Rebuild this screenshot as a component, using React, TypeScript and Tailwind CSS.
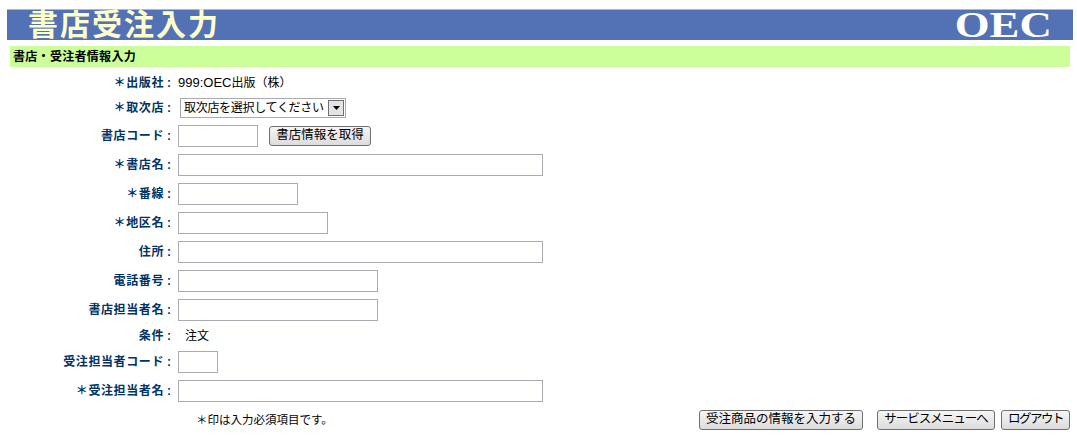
import React from 'react';

const font = { fontFamily: '"Liberation Sans", "Noto Sans CJK JP", sans-serif' };

const Label = ({ text }: { text: string }) => (
    <div className="flex w-[170px] shrink-0 justify-end text-[12px] font-bold tracking-[0.6px] text-[#003366]">
        <span>{text}</span>
        <span className="ml-[3px] w-[3px]">:</span>
    </div>
);

const Field = ({ label, width }: { label: string; width: string }) => (
    <div className="flex h-[29px] items-center">
        <Label text={label} />
        <input className={`ml-[8px] h-[22px] border border-[#aaaab2] bg-white ${width}`} />
    </div>
);

const Btn = ({ text, className = '' }: { text: string; className?: string }) => (
    <button className={`h-[20px] whitespace-nowrap rounded-[3px] border border-[#707070] bg-gradient-to-b from-[#f6f6f6] to-[#dcdcdc] text-center text-[12.5px] leading-none text-black ${className}`}>
        {text}
    </button>
);

export default function App() {
    return (
        <div className="h-[448px] w-[1077px] overflow-hidden bg-white pt-[9px]" style={font}>
            <div className="mx-[7px] flex h-[31px] w-[1066px] items-center justify-between border-t border-[#a9b8d8] bg-[#5372b6] pl-[21px] pr-[21px]">
                <span className="text-[30px] font-bold leading-none tracking-[2px] text-[#ffffcc]">書店受注入力</span>
                <span className="origin-right scale-x-[1.28] text-[35px] font-bold leading-none text-white" style={{ fontFamily: '"Liberation Serif", serif' }}>OEC</span>
            </div>
            <div className="mx-[10px] mt-[6px] flex h-[21px] w-[1060px] items-center bg-[#ccff99] pl-[3px] text-[12px] font-bold tracking-[0.3px] text-black">
                書店・受注者情報入力
            </div>

            <div className="mt-[3px] flex h-[25px] items-center">
                <Label text="＊出版社" />
                <span className="ml-[8px] text-[12px] text-black"><span className="text-[13px]">999:OEC</span>出版（株）</span>
            </div>
            <div className="flex h-[26px] items-center">
                <Label text="＊取次店" />
                <div className="ml-[10px] flex h-[20px] w-[166px] items-center justify-between border border-[#aaaab2] pl-[3px] pr-[1px] text-[12px] text-black">
                    <span className="whitespace-nowrap leading-none tracking-[-0.3px]">取次店を選択してください</span>
                    <span className="flex h-[16px] w-[16px] shrink-0 items-center justify-center border border-[#707070] bg-[#e4e4e4]">
                        <svg width="7" height="4" viewBox="0 0 7 4"><path d="M0 0h7L3.5 4z" fill="#000" /></svg>
                    </span>
                </div>
            </div>

            <div className="flex h-[29px] items-center">
                <Label text="書店コード" />
                <input className="ml-[8px] h-[22px] w-[80px] border border-[#aaaab2] bg-white" />
                <Btn text="書店情報を取得" className="ml-[11px] w-[102px]" />
            </div>
            <Field label="＊書店名" width="w-[365px]" />
            <Field label="＊番線" width="w-[120px]" />
            <Field label="＊地区名" width="w-[150px]" />
            <Field label="住所" width="w-[365px]" />
            <Field label="電話番号" width="w-[200px]" />
            <Field label="書店担当者名" width="w-[200px]" />
            <div className="flex h-[23px] items-center">
                <Label text="条件" />
                <span className="ml-[15px] text-[12px] text-black">注文</span>
            </div>
            <Field label="受注担当者コード" width="w-[40px]" />
            <Field label="＊受注担当者名" width="w-[365px]" />

            <div className="flex h-[29px] items-center pr-[7px]">
                <span className="ml-[196px] pt-[2px] text-[11.5px] text-black">＊印は入力必須項目です。</span>
                <div className="ml-auto flex items-center">
                    <Btn text="受注商品の情報を入力する" className="w-[164px]" />
                    <Btn text="サービスメニューへ" className="ml-[14px] w-[118px] tracking-[-1px]" />
                    <Btn text="ログアウト" className="ml-[6px] w-[69px] tracking-[-1.5px]" />
                </div>
            </div>
        </div>
    );
}
